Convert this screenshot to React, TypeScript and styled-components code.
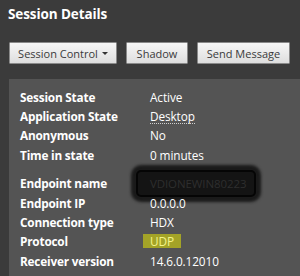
import styled, { createGlobalStyle } from "styled-components";

const GlobalStyle = createGlobalStyle`
  html, body {
    margin: 0;
    padding: 0;
    background: #3b3b3b;
  }
  body {
    font-family: "Open Sans", "Noto Sans", sans-serif;
  }
`;

const Page = styled.div`
  width: 300px;
  height: 276px;
  overflow: hidden;
  background: #3b3b3b;
  display: flex;
  flex-direction: column;
`;

const Title = styled.h2`
  margin: 0;
  padding: 5px 0 0 8px;
  height: 37px;
  box-sizing: border-box;
  font-size: 13.5px;
  font-weight: 700;
  color: #ffffff;
  letter-spacing: -0.1px;
`;

const Toolbar = styled.div`
  display: flex;
  gap: 9px;
  padding-left: 9px;
  height: 42px;
  box-sizing: border-box;
  padding-top: 5px;
`;

const Button = styled.button<{ $w: number }>`
  width: ${(p) => p.$w}px;
  height: 22px;
  box-sizing: border-box;
  border: 1px solid #8a8a8a;
  border-radius: 1px;
  background: linear-gradient(#f7f7f7, #dedede);
  color: #3a3a3a;
  font-family: "Open Sans", "Noto Sans", sans-serif;
  font-size: 11px;
  padding: 0;
  display: flex;
  align-items: center;
  justify-content: center;
  gap: 4px;
`;

const Caret = styled.span`
  width: 0;
  height: 0;
  border-left: 3px solid transparent;
  border-right: 3px solid transparent;
  border-top: 3px solid #333;
  margin-top: 1px;
`;

const Panel = styled.div`
  flex: 1;
  margin-left: 9px;
  background: #545454;
  padding: 8px 0 0 11px;
  display: flex;
  flex-direction: column;
`;

const Group = styled.div<{ $gap?: number }>`
  display: grid;
  grid-template-columns: 130px 1fr;
  grid-auto-rows: 19.4px;
  align-items: center;
  margin-bottom: ${(p) => p.$gap ?? 0}px;
`;

const Label = styled.span`
  font-size: 11.8px;
  font-weight: 700;
  color: #ffffff;
  letter-spacing: -0.2px;
  white-space: nowrap;
`;

const Value = styled.span`
  font-size: 11.8px;
  color: #ffffff;
  letter-spacing: -0.1px;
  white-space: nowrap;
`;

const Dotted = styled(Value)`
  justify-self: start;
  border-bottom: 1px dotted #cfcfcf;
  line-height: 14px;
`;

const Highlight = styled(Value)`
  justify-self: start;
  background: #a3a327;
  color: #f4f48a;
  padding: 1px 7px;
  margin-left: -7px;
  line-height: 12px;
`;

const Redacted = styled(Value)`
  justify-self: start;
  margin-left: -14px;
  width: 120px;
  height: 27px;
  box-sizing: border-box;
  background: #141414;
  border: 2px solid #050505;
  border-radius: 5px;
  box-shadow: 0 0 3px 5px #1a1a1a;
  color: #2e2e2e;
  font-size: 11.5px;
  display: flex;
  align-items: center;
  padding-left: 12px;
`;

export default function App() {
  return (
    <>
      <GlobalStyle />
      <Page>
        <Title>Session Details</Title>
        <Toolbar>
          <Button $w={108}>
            Session Control <Caret />
          </Button>
          <Button $w={62}>Shadow</Button>
          <Button $w={93}>Send Message</Button>
        </Toolbar>
        <Panel>
          <Group $gap={9}>
            <Label>Session State</Label>
            <Value>Active</Value>
            <Label>Application State</Label>
            <Dotted>Desktop</Dotted>
            <Label>Anonymous</Label>
            <Value>No</Value>
            <Label>Time in state</Label>
            <Value>0 minutes</Value>
          </Group>
          <Group>
            <Label>Endpoint name</Label>
            <Redacted>VDIONEWIN80223</Redacted>
            <Label>Endpoint IP</Label>
            <Value>0.0.0.0</Value>
            <Label>Connection type</Label>
            <Value>HDX</Value>
            <Label>Protocol</Label>
            <Highlight>UDP</Highlight>
            <Label>Receiver version</Label>
            <Value>14.6.0.12010</Value>
          </Group>
        </Panel>
      </Page>
    </>
  );
}
